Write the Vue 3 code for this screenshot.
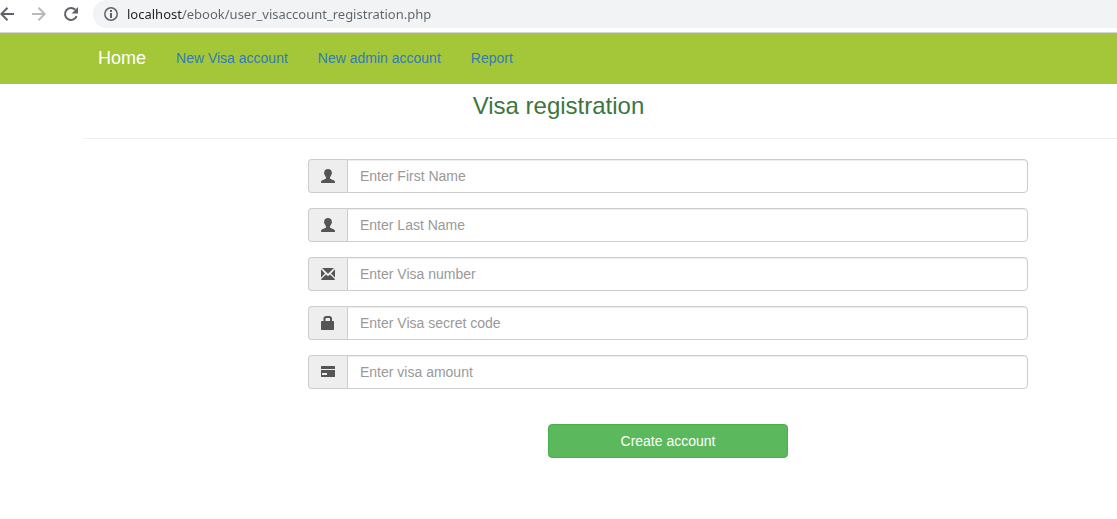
<script setup>
import { ref, reactive } from 'vue'

const address = ref('localhost/ebook/user_visaccount_registration.php')

const fields = [
  { id: 'first-name', label: 'Enter First Name', icon: 'user' },
  { id: 'last-name', label: 'Enter Last Name', icon: 'user' },
  { id: 'visa-number', label: 'Enter Visa number', icon: 'envelope' },
  { id: 'secret-code', label: 'Enter Visa secret code', icon: 'lock' },
  { id: 'amount', label: 'Enter visa amount', icon: 'card' }
]

const form = reactive(Object.fromEntries(fields.map((f) => [f.id, ''])))
</script>

<template>
  <div class="window">
    <div class="toolbar">
      <button type="button" class="tool" aria-label="Back">
        <svg width="16" height="16" viewBox="0 0 16 16" fill="none" stroke="#5f6368" stroke-width="2">
          <path d="M15 8H2.500M8.500 1.800L2.300 8l6.200 6.200" />
        </svg>
      </button>
      <button type="button" class="tool" aria-label="Forward">
        <svg width="16" height="16" viewBox="0 0 16 16" fill="none" stroke="#bababa" stroke-width="2">
          <path d="M1 8h12.500M7.500 1.800L13.700 8l-6.200 6.200" />
        </svg>
      </button>
      <button type="button" class="tool" aria-label="Reload">
        <svg width="16" height="16" viewBox="0 0 16 16">
          <path d="M13.600 10.200A6 6 0 1 1 12.300 3.800" fill="none" stroke="#5f6368" stroke-width="2" />
          <path d="M15 1v6.400H8.600z" fill="#5f6368" />
        </svg>
      </button>
      <div class="address">
        <svg width="14" height="14" viewBox="0 0 14 14">
          <circle cx="7" cy="7" r="6.200" fill="none" stroke="#5f6368" stroke-width="1.500" />
          <path d="M6 3h2v2H6zM6 6h2v5H6z" fill="#5f6368" />
        </svg>
        <input v-model="address" class="url" type="text" aria-label="Address" spellcheck="false" />
      </div>
    </div>

    <nav class="navbar">
      <a class="brand" href="#">Home</a>
      <a class="link" href="#">New Visa account</a>
      <a class="link" href="#">New admin account</a>
      <a class="link" href="#">Report</a>
    </nav>

    <main>
      <h1>Visa registration</h1>
      <hr />
      <form @submit.prevent>
        <div v-for="f in fields" :key="f.id" class="group">
          <label class="addon" :for="f.id" :aria-label="f.label">
            <svg width="14" height="14" viewBox="0 0 14 14" fill="#555">
              <path
                v-if="f.icon === 'user'"
                d="M7 0C4.600 0 3.200 1.300 3.200 3.400c0 .5-.2.700-.1 1.400.1.700.5.900.7 1.300.2 1 .7 1.600 1.200 2.100v1.200C4.800 10.300 .9 10.600 .2 12.200L0 14h14l-.2-1.800C13.100 10.600 9.200 10.300 9 9.400V8.200c.5-.5 1-1.100 1.200-2.100.2-.4.6-.6.7-1.300.1-.7-.1-.9-.1-1.400C10.800 1.300 9.400 0 7 0z"
              />
              <path
                v-else-if="f.icon === 'envelope'"
                d="M1 1h12L7 6.700zM0 2.300L4 6.500 0 10.500zM14 2.300v8.200L10 6.500zM5 7.500L7 9.300l2-1.800 4.800 4.500v1H.2v-1z"
              />
              <path
                v-else-if="f.icon === 'lock'"
                fill-rule="evenodd"
                d="M2.500 5V2.500C2.500 1 3.500 0 5 0h3.500C10 0 11 1 11 2.500V5h1.300c.4 0 .7.300.7.700v7.600c0 .4-.3.700-.7.700H.7c-.4 0-.7-.3-.7-.7V5.700C0 5.300.3 5 .7 5zM4.500 5H9V3c0-.7-.3-1-1-1H5.500c-.7 0-1 .3-1 1z"
              />
              <path
                v-else
                fill-rule="evenodd"
                d="M.5 1h13c.3 0 .5.200.5.500V4H0V1.500C0 1.200.200 1 .5 1zM0 5h14v6.500c0 .3-.2.500-.5.500H.5c-.3 0-.5-.2-.5-.5zM1 8v2h5V8z"
              />
            </svg>
          </label>
          <input :id="f.id" v-model="form[f.id]" class="control" type="text" :placeholder="f.label" />
        </div>
        <button class="submit" type="submit">Create account</button>
      </form>
    </main>
  </div>
</template>

<style>
body {
  margin: 0;
  background: #fff;
}
</style>

<style scoped>
.window {
  font: 14px/20px "Liberation Sans", Arial, sans-serif;
  color: #333;
}
.window * {
  box-sizing: border-box;
}
svg {
  display: block;
}
.toolbar {
  display: flex;
  align-items: flex-start;
  height: 33px;
  border-bottom: 1px solid #d5d7da;
}
.tool {
  flex: none;
  width: 32px;
  height: 28px;
  padding: 0;
  border: 0;
  background: none;
}
.tool:nth-child(3) {
  width: 29px;
}
.tool svg {
  margin-left: -1px;
}
.address {
  display: flex;
  flex: 1;
  align-items: center;
  gap: 9px;
  height: 28px;
  padding-left: 11px;
  border-radius: 14px 0 0 14px;
  background: #f1f3f4;
}
.url {
  flex: 1;
  height: 20px;
  padding: 0;
  border: 0;
  outline: 0;
  font: 13px/20px "Noto Sans", "Open Sans", sans-serif;
  color: transparent;
  caret-color: #202124;
  background: linear-gradient(90deg, #202124 56px, #5f6368 56px);
  background-clip: text;
}
.navbar {
  display: flex;
  align-items: center;
  padding-left: 83px;
  border-bottom: 1px solid #a4c739;
  background: #a4c739;
}
.navbar a {
  padding: 15px;
  text-decoration: none;
  color: #337ab7;
}
.navbar .brand {
  font-size: 18px;
  color: #fff;
}
h1 {
  margin: 9px 0 19px;
  font-size: 24px;
  font-weight: 400;
  line-height: 26px;
  text-align: center;
  color: #3c763d;
}
hr {
  margin: 0 0 20px 83px;
  border: 0;
  border-top: 1px solid #eee;
}
form {
  display: flex;
  flex-direction: column;
  gap: 15px;
  margin: 0 89px 0 308px;
}
.group {
  display: flex;
  height: 34px;
}
.addon {
  display: flex;
  flex: none;
  align-items: center;
  width: 39px;
  padding-left: 12px;
  border: 1px solid #ccc;
  border-right: 0;
  border-radius: 4px 0 0 4px;
  background: #eee;
}
.control {
  flex: 1;
  min-width: 0;
  padding: 6px 12px;
  border: 1px solid #ccc;
  border-radius: 0 4px 4px 0;
  font: inherit;
  color: #555;
  background: #fff;
  box-shadow: inset 0 1px 1px rgba(0, 0, 0, 0.075);
}
.control::placeholder {
  color: #999;
  opacity: 1;
}
.submit {
  align-self: center;
  width: 33.3333%;
  height: 34px;
  margin-top: 20px;
  padding: 0;
  border: 1px solid #4cae4c;
  border-radius: 4px;
  font: inherit;
  color: #fff;
  background: #5cb85c;
}
</style>
